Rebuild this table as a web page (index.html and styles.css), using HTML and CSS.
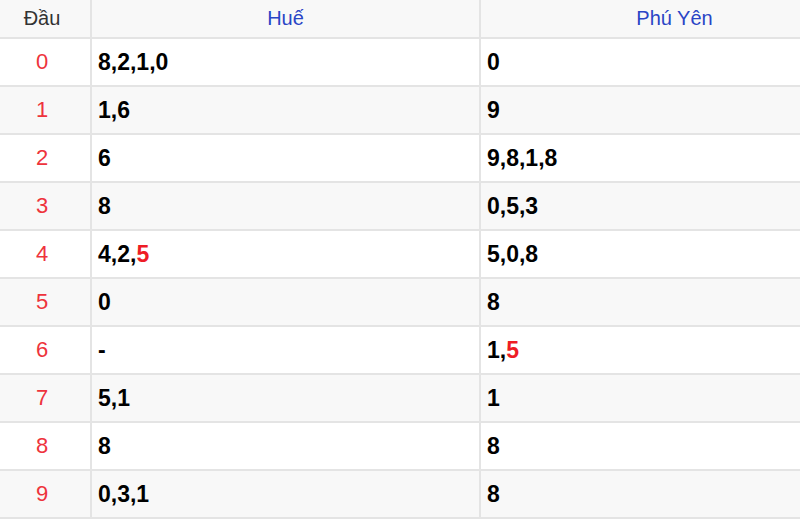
FILE: index.html
```html
<!DOCTYPE html>
<html lang="vi">
<head>
<meta charset="utf-8">
<title>Đầu</title>
<link rel="stylesheet" href="styles.css">
</head>
<body>
<div class="wrap">
<table class="loto">
  <colgroup><col class="c-dau"><col class="c-prov"><col class="c-prov"></colgroup>
  <thead>
    <tr><th class="h-dau">Đầu</th><th class="h-prov">Huế</th><th class="h-prov">Phú Yên</th></tr>
  </thead>
  <tbody>
    <tr><td class="dau">0</td><td class="val">8,2,1,0</td><td class="val">0</td></tr>
    <tr><td class="dau">1</td><td class="val">1,6</td><td class="val">9</td></tr>
    <tr><td class="dau">2</td><td class="val">6</td><td class="val">9,8,1,8</td></tr>
    <tr><td class="dau">3</td><td class="val">8</td><td class="val">0,5,3</td></tr>
    <tr><td class="dau">4</td><td class="val">4,2,<span class="hot">5</span></td><td class="val">5,0,8</td></tr>
    <tr><td class="dau">5</td><td class="val">0</td><td class="val">8</td></tr>
    <tr><td class="dau">6</td><td class="val">-</td><td class="val">1,<span class="hot">5</span></td></tr>
    <tr><td class="dau">7</td><td class="val">5,1</td><td class="val">1</td></tr>
    <tr><td class="dau">8</td><td class="val">8</td><td class="val">8</td></tr>
    <tr><td class="dau">9</td><td class="val">0,3,1</td><td class="val">8</td></tr>
  </tbody>
</table>
</div>
</body>
</html>
```

FILE: styles.css
```css
html, body {
  margin: 0;
  padding: 0;
  overflow: hidden;
  background: #ffffff;
}
.wrap {
  width: 800px;
  overflow: hidden;
}
.loto {
  border-collapse: collapse;
  table-layout: fixed;
  width: 870px;
  font-family: "Liberation Sans", Arial, sans-serif;
}
.c-dau { width: 91px; }
.c-prov { width: 389px; }
.loto th, .loto td {
  padding: 0;
  border-bottom: 2px solid #e4e4e4;
  border-right: 2px solid #e4e4e4;
}
.loto thead tr {
  background: #f8f8f8;
}
.loto th {
  height: 37px;
  font-weight: normal;
  font-size: 20px;
  text-align: center;
  vertical-align: middle;
}
.h-dau {
  color: #333333;
  padding-right: 6px !important;
}
.h-prov {
  color: #2a45c6;
}
.loto tbody tr:nth-child(even) {
  background: #f8f8f8;
}
.loto td {
  height: 46px;
  vertical-align: middle;
}
.dau {
  text-align: center;
  color: #ee333c;
  font-size: 22px;
  padding-right: 6px !important;
}
.val {
  font-size: 23px;
  font-weight: bold;
  color: #000000;
  padding-left: 6px !important;
}
.hot {
  color: #ee1c25;
}
```
